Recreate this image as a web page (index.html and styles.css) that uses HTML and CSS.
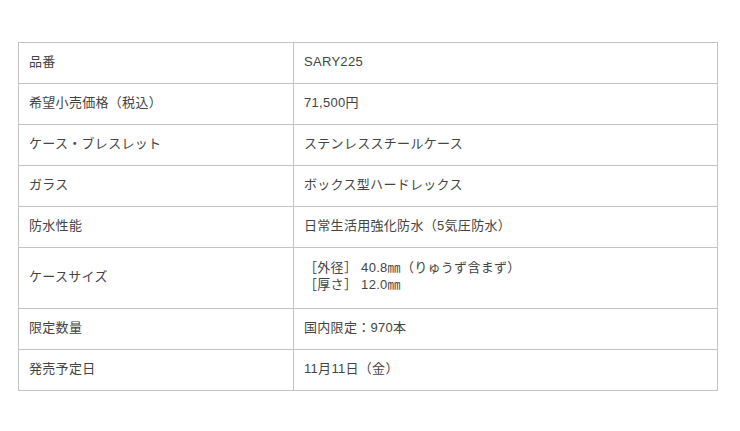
FILE: index.html
```html
<!DOCTYPE html>
<html lang="ja">
<head>
<meta charset="utf-8">
<link rel="stylesheet" href="styles.css">
</head>
<body>
<div class="page">
<table class="spec">
  <tr><th>品番</th><td>SARY225</td></tr>
  <tr><th>希望小売価格（税込）</th><td>71,500円</td></tr>
  <tr><th>ケース・ブレスレット</th><td>ステンレススチールケース</td></tr>
  <tr><th>ガラス</th><td>ボックス型ハードレックス</td></tr>
  <tr><th>防水性能</th><td>日常生活用強化防水（5気圧防水）</td></tr>
  <tr class="tall"><th>ケースサイズ</th><td>［外径］ 40.8㎜（りゅうず含まず）<br>［厚さ］ 12.0㎜</td></tr>
  <tr><th>限定数量</th><td>国内限定：970本</td></tr>
  <tr><th>発売予定日</th><td>11月11日（金）</td></tr>
</table>
</div>
</body>
</html>
```

FILE: styles.css
```css
html, body {
  margin: 0;
  padding: 0;
  background: #fff;
}
.page {
  padding: 42px 22px 0 18px;
}
.spec {
  width: 700px;
  border-collapse: collapse;
  font-family: "Liberation Sans", "Noto Sans CJK JP", sans-serif;
  font-size: 13px;
  color: #444;
}
.spec th, .spec td {
  border: 1px solid #c4c4c4;
  text-align: left;
  font-weight: normal;
  padding: 10px 10px 13px 10px;
  line-height: 17px;
  height: 17px;
  vertical-align: middle;
  letter-spacing: 0.3px;
}
.spec th {
  width: 254px;
}
.spec .tall th, .spec .tall td {
  padding-top: 11px;
  padding-bottom: 15px;
}
```
